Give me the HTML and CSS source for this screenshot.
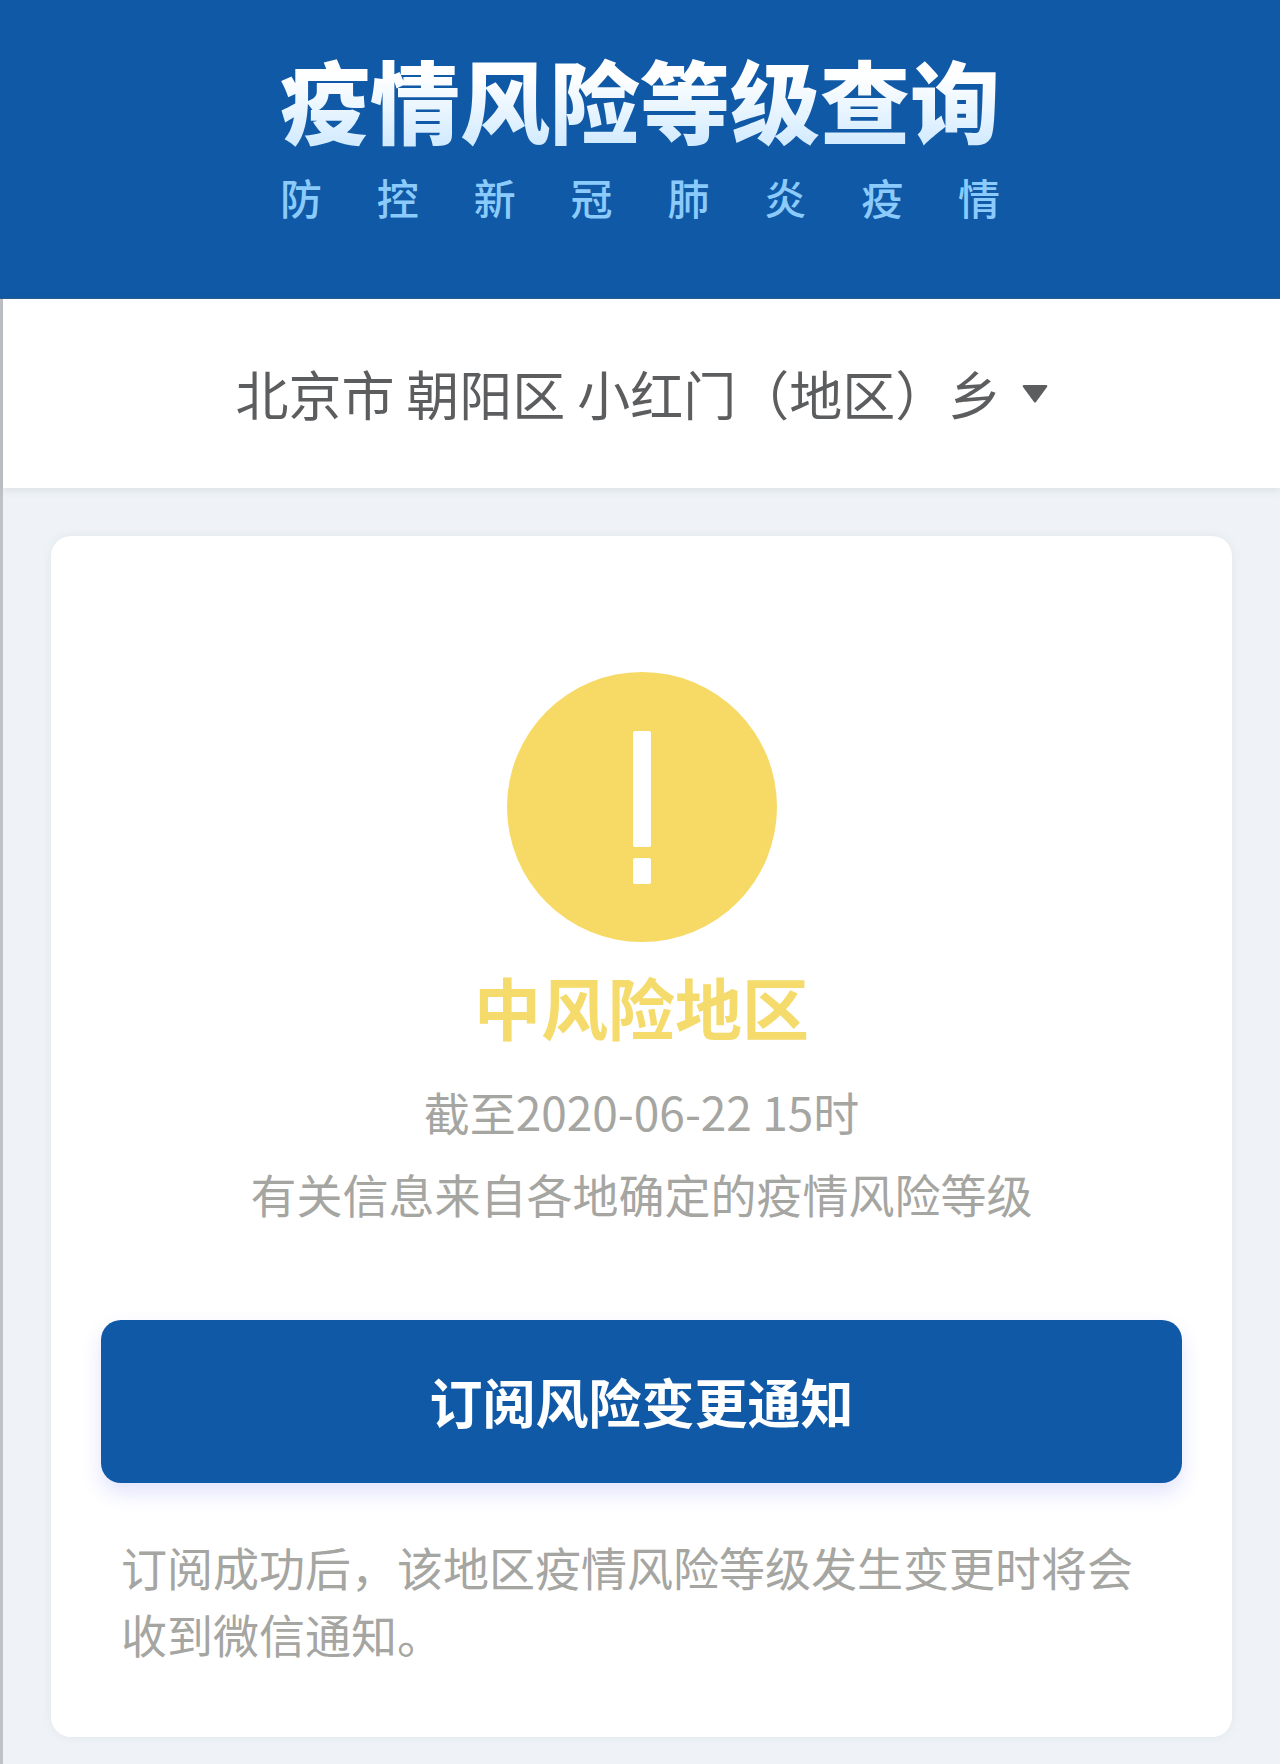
FILE: index.html
```html
<!DOCTYPE html>
<html lang="zh-CN">
<head>
    <meta charset="UTF-8">
    <meta name="viewport" content="width=device-width, initial-scale=1.0">
    <title>疫情风险等级查询</title>
    <link rel="stylesheet" href="styles.css">
</head>
<body>
    <header class="banner">
        <div class="banner-text">
            <h1>疫情风险等级查询</h1>
            <p>防 控 新 冠 肺 炎 疫 情</p>
        </div>
    </header>
    <main>
        <div class="region">
            <select aria-label="选择地区">
                <option>北京市 朝阳区 小红门（地区）乡</option>
            </select>
            <svg class="arrow" viewBox="0 0 26 18" aria-hidden="true">
                <path d="M2 0h22q2 0 1 2L14 17q-1 1-2 0L1 2Q0 0 2 0z"/>
            </svg>
        </div>
        <section class="card">
            <svg class="icon" viewBox="0 0 270 270" aria-hidden="true">
                <circle cx="135" cy="135" r="135" fill="#f7da65"/>
                <rect x="126" y="59" width="18" height="116" rx="2" fill="#fff"/>
                <rect x="126" y="186" width="18" height="26" rx="2" fill="#fff"/>
            </svg>
            <h2>中风险地区</h2>
            <p class="info">截至2020-06-22 15时<br>有关信息来自各地确定的疫情风险等级</p>
            <button type="button">订阅风险变更通知</button>
            <p class="note">订阅成功后，该地区疫情风险等级发生变更时将会收到微信通知。</p>
        </section>
    </main>
</body>
</html>
```
FILE: styles.css
```css
* {
    box-sizing: border-box;
}

body {
    margin: 0;
    min-height: 100vh;
    display: flex;
    flex-direction: column;
    font-family: "Noto Sans CJK SC", sans-serif;
    background-color: #eff3f8;
}

h1, h2, p {
    margin: 0;
}

.banner {
    display: flex;
    justify-content: center;
    padding: 42px 20px 68px;
    background-color: #1059a6;
    border-bottom: 1px solid #2a5c8c;
}

.banner h1 {
    font-size: 90px;
    line-height: 112px;
    font-weight: 900;
    color: transparent;
    background: linear-gradient(#fff 30%, #d3ebff 90%);
    -webkit-background-clip: text;
    background-clip: text;
}

.banner p {
    margin-top: 10px;
    font-size: 42px;
    line-height: 66px;
    font-weight: 500;
    color: #8bcbfb;
    text-align-last: justify;
}

main {
    flex: 1;
    border-left: 3px solid #bfc2c6;
}

.region {
    display: flex;
    justify-content: center;
    align-items: center;
    gap: 20px;
    padding: 56px 20px;
    background-color: #fff;
    box-shadow: 0 2px 8px rgba(90, 110, 100, 0.15);
}

.region select {
    appearance: none;
    border: 0;
    padding: 0;
    background: none;
    font-family: inherit;
    font-size: 53px;
    line-height: 77px;
    color: #5c5d5f;
}

.arrow {
    width: 26px;
    height: 18px;
    fill: #5c5d5f;
    pointer-events: none;
}

.card {
    display: flex;
    flex-direction: column;
    align-items: center;
    margin: 48px 48px 28px;
    padding: 136px 50px 70px;
    background-color: #fff;
    border-radius: 20px;
    box-shadow: 0 0 10px rgba(110, 140, 120, 0.12);
}

.icon {
    width: 270px;
    height: 270px;
}

.card h2 {
    margin-top: 16px;
    font-size: 67px;
    line-height: 96px;
    font-weight: 700;
    color: #f4db6c;
}

.info {
    margin-top: 16px;
    font-size: 46px;
    line-height: 82px;
    text-align: center;
    color: #a5a5a2;
}

.card button {
    width: 100%;
    margin-top: 86px;
    padding: 43px 20px;
    border: 0;
    border-radius: 20px;
    background-color: #1059a6;
    box-shadow: 0 10px 20px rgba(60, 70, 240, 0.15);
    font-family: inherit;
    font-size: 53px;
    line-height: 77px;
    font-weight: 700;
    color: #fff;
}

.note {
    width: 100%;
    margin-top: 50px;
    padding: 0 20px;
    font-size: 46px;
    line-height: 67px;
    color: #a5a5a2;
}
```
